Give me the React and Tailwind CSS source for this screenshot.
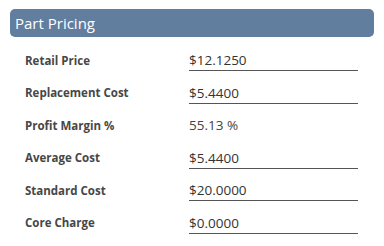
import React from 'react'

const rows = [
  { label: 'Retail Price', value: '$12.1250', input: true },
  { label: 'Replacement Cost', value: '$5.4400', input: true },
  { label: 'Profit Margin %', value: '55.13 %', input: false },
  { label: 'Average Cost', value: '$5.4400', input: true },
  { label: 'Standard Cost', value: '$20.0000', input: true },
  { label: 'Core Charge', value: '$0.0000', input: true },
]

function PartPricing() {
  return (
    <div className="w-[384px] h-[246px] bg-white px-[10px] pt-[9px] font-['Open_Sans',sans-serif]">
      <div className="h-[28px] rounded-[5px] bg-[#627e9f] pl-[5px] flex items-center text-[15px] text-white">
        Part Pricing
      </div>
      <div className="pt-[7px] pl-[15px]">
        {rows.map((r) => (
          <div key={r.label} className="h-[32.5px] flex items-center">
            <div className="w-[164px] text-[11.5px] font-bold text-[#474747]">{r.label}</div>
            <div
              className={
                r.input
                  ? 'w-[169px] mt-[3px] pb-[2px] border-b border-[#555] text-[13.5px] leading-[16px] text-[#333]'
                  : 'w-[169px] text-[13.5px] leading-[16px] text-[#444]'
              }
            >
              {r.value}
            </div>
          </div>
        ))}
      </div>
    </div>
  )
}

export default function App() {
  return <PartPricing />
}
